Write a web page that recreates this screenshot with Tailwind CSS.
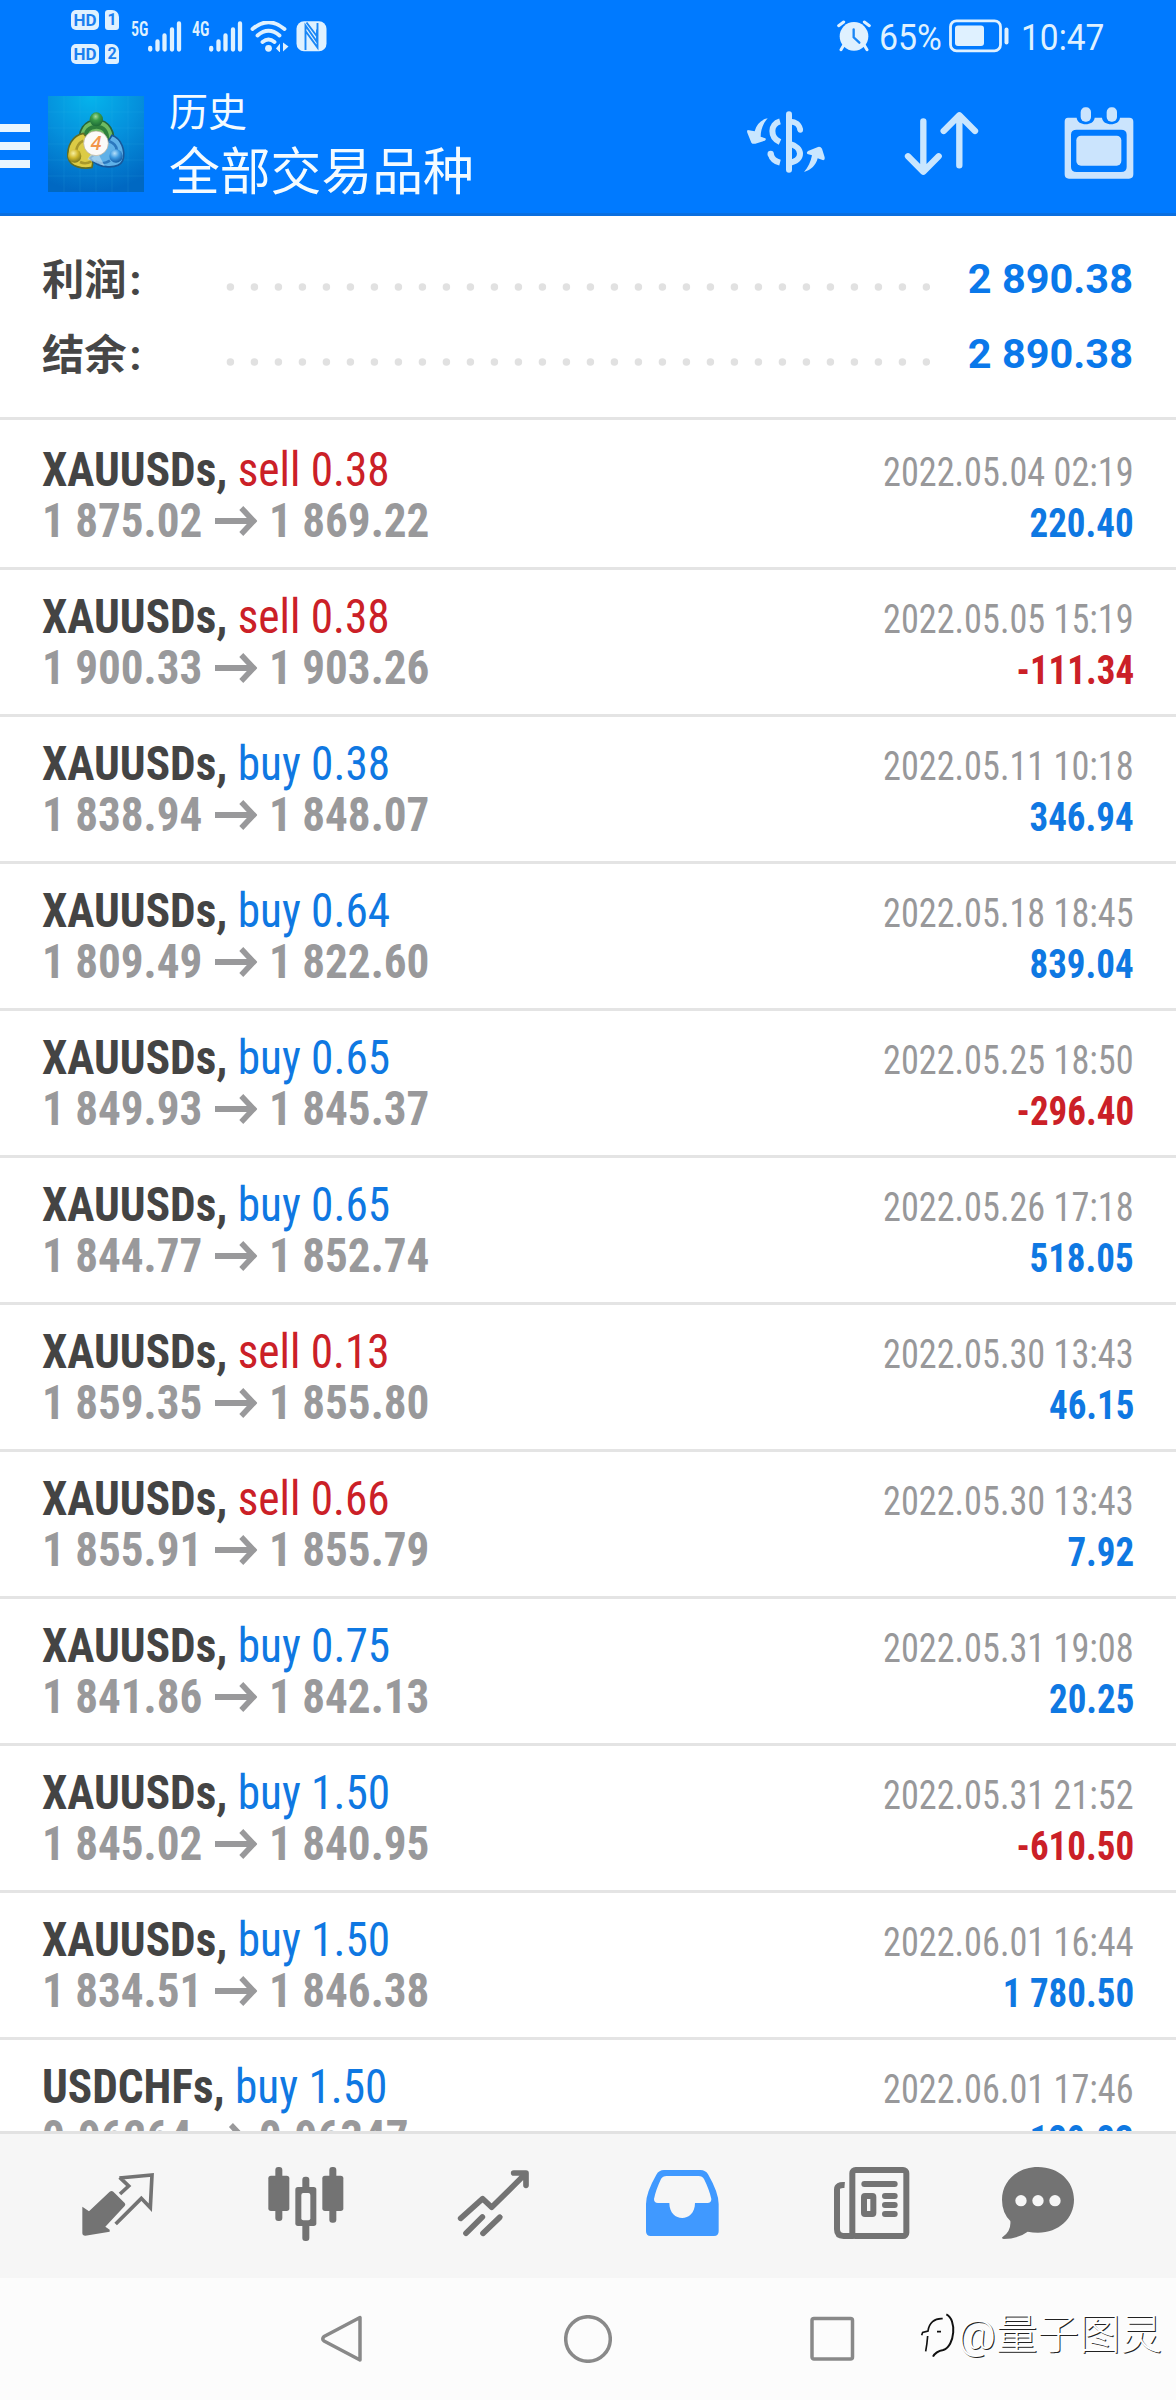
<!DOCTYPE html>
<html lang="zh">
<head>
<meta charset="utf-8">
<title>历史</title>
<script src="https://cdn.jsdelivr.net/npm/@tailwindcss/browser@4"></script>
</head>
<body class="w-[1176px] h-[2400px] overflow-hidden flex flex-col bg-white font-['Roboto','Noto_Sans_CJK_SC',sans-serif] whitespace-nowrap">

<header class="h-[216px] shrink-0 bg-[#007aff] border-b-[3px] border-[#0a6fe0] flex flex-col">
  <!-- status bar -->
  <div class="h-[72px] flex items-center justify-between pl-[71px] pr-[72px] text-[#dff1ff]">
    <div class="flex items-start h-[54px] mt-0.5">
      <div class="flex flex-col gap-[14px]">
        <div class="flex gap-[6px] h-5 text-[#1a7ff0] font-bold leading-5">
          <span class="w-[28px] h-5 rounded-[5px] bg-[#dff1ff] text-[17px] text-center">HD</span>
          <span class="w-[14px] h-5 rounded-[3px] rounded-tr-[7px] bg-[#dff1ff] text-[16px] text-center">1</span>
        </div>
        <div class="flex gap-[6px] h-5 text-[#1a7ff0] font-bold leading-5">
          <span class="w-[28px] h-5 rounded-[5px] bg-[#dff1ff] text-[17px] text-center">HD</span>
          <span class="w-[14px] h-5 rounded-[3px] rounded-tr-[7px] bg-[#dff1ff] text-[16px] text-center">2</span>
        </div>
      </div>
      <span class="w-[17px] ml-[12px] mt-[9px] text-[20px] leading-5 font-semibold [font-stretch:condensed] origin-left scale-x-[.8]">5G</span>
      <svg class="mt-[11px] w-[34px] h-[31px]" viewBox="0 0 34 31" stroke="currentColor" stroke-width="4.3" stroke-linecap="round"><path d="M2.2 27v1.500M9.500 20.500v8M16.500 14.500v14M24 8.500v20M31 2.500v26"/></svg>
      <span class="w-[17px] ml-[10px] mt-[9px] text-[20px] leading-5 font-semibold [font-stretch:condensed] origin-left scale-x-[.8]">4G</span>
      <svg class="mt-[11px] w-[34px] h-[31px]" viewBox="0 0 34 31" stroke="currentColor" stroke-width="4.3" stroke-linecap="round"><path d="M2.200 27v1.500M9.500 20.500v8M16.500 14.500v14M24 8.500v20M31 2.500v26"/></svg>
      <svg class="ml-[7px] mt-[11px] w-[39px] h-[31px]" viewBox="0 0 39 31" fill="none" stroke="currentColor" stroke-width="3.800" stroke-linecap="round"><path d="M2.500 8Q18.500-5.500 34.500 8M7.500 14.500Q18.500 5 29.500 14.500M12.500 21Q18.500 16 24.500 21"/><circle cx="18.500" cy="27.300" r="3.400" fill="currentColor" stroke="none"/><path d="M26 27.500l4-5v9zM38.500 25.500l-5.500-4v9z" fill="currentColor" stroke="none"/></svg>
      <svg class="ml-[7px] mt-[11px] w-[31px] h-[31px]" viewBox="0 0 31 31"><rect x=".5" y=".3" width="30" height="30" rx="7.500" fill="currentColor"/><path d="M9.500 29V4.500L21 21V8.500M10.500 1.500L21.500 16M21.500 2v24.500L9.500 10" fill="none" stroke="#1a86f5" stroke-width="1.900"/></svg>
    </div>
    <div class="flex items-center h-[40px] text-[36px]">
      <svg class="w-[34px] h-[32px]" viewBox="0 0 102 96"><g stroke="currentColor" stroke-width="9" stroke-linecap="round"><path d="M5 17L20 6M97 17L82 6M20 76l-8 13M82 76l8 13"/></g><circle cx="51" cy="49" r="43" fill="currentColor"/><path d="M50 28v24l17 16" fill="none" stroke="#1a86f5" stroke-width="7" stroke-linecap="round"/></svg>
      <span class="w-[64px] ml-[8px] mt-[3px] origin-left scale-x-[.94]">65%</span>
      <svg class="ml-[6px] w-[60px] h-[34px]" viewBox="0 0 60 34"><rect x="1.500" y="1.800" width="50" height="30" rx="6" fill="none" stroke="currentColor" stroke-width="2.800"/><rect x="6" y="6.500" width="29" height="20.500" rx="3" fill="currentColor"/><rect x="55.500" y="8.500" width="4" height="17" rx="2" fill="currentColor"/></svg>
      <span class="ml-[12px] mt-[3px] w-[83px] origin-left scale-x-[.93]">10:47</span>
    </div>
  </div>
  <!-- app bar -->
  <div class="h-[141px] flex items-start text-[#f4fbff]">
    <div class="mt-[52px] w-[30px] flex flex-col gap-[10px]"><i class="h-2 bg-[#e9f6ff]"></i><i class="h-2 bg-[#e9f6ff]"></i><i class="h-2 bg-[#e9f6ff]"></i></div>
    <svg class="ml-[18px] mt-6 w-24 h-24" viewBox="54 48 288 288">
      <defs>
        <radialGradient id="bg" cx=".45" cy="0" r="1"><stop offset="0" stop-color="#05b4ec"/><stop offset=".5" stop-color="#0590dc"/><stop offset="1" stop-color="#0068c2"/></radialGradient>
        <radialGradient id="g" cx=".45" cy=".3" r=".7"><stop offset="0" stop-color="#a5dc98"/><stop offset=".4" stop-color="#3c9d4a"/><stop offset="1" stop-color="#1d6a36"/></radialGradient>
        <radialGradient id="y" cx=".4" cy=".3" r=".7"><stop offset="0" stop-color="#f7f0a0"/><stop offset=".5" stop-color="#d2b92d"/><stop offset="1" stop-color="#7f7a1c"/></radialGradient>
        <radialGradient id="b" cx=".4" cy=".3" r=".7"><stop offset="0" stop-color="#b5e0fa"/><stop offset=".5" stop-color="#3f9be0"/><stop offset="1" stop-color="#135ea8"/></radialGradient>
      </defs>
      <rect x="54" y="48" width="288" height="288" fill="url(#bg)"/>
      <path d="M102 48v288M150 48v288M198 48v288M246 48v288M294 48v288M54 96h288M54 144h288M54 192h288M54 240h288M54 288h288" stroke="#49c2ee" stroke-opacity=".2" stroke-width="2" fill="none"/>
      <path d="M150 200c-10-50 14-80 50-80s60 34 48 84l-22 28-50-8z" fill="#6fbb62" stroke="#27663a" stroke-width="5"/>
      <path d="M168 176c-4-22 10-36 31-36s34 14 32 40" fill="none" stroke="#2f7f3d" stroke-width="12"/>
      <path d="M186 262c-24 6-66 0-72-30-4-34 14-66 46-72l36 44z" fill="#dccb45" stroke="#5f6d25" stroke-width="5"/>
      <path d="M160 182c-12 6-20 18-22 32M150 246c12 6 24 4 34-2" fill="none" stroke="#a8982a" stroke-width="8"/>
      <path d="M246 166c28 10 42 46 32 76-12 26-74 26-98-8l42-30z" fill="#5fb1e8" stroke="#17589b" stroke-width="5"/>
      <path d="M196 244c14 8 32 6 44-2M238 184c14 6 22 14 22 26" fill="none" stroke="#2b78be" stroke-width="8"/>
      <path d="M196 204l28 54-52-20z" fill="#b8daf0" opacity=".7"/>
      <ellipse cx="199" cy="118" rx="20" ry="21" fill="url(#g)"/>
      <circle cx="134" cy="228" r="20" fill="url(#y)"/>
      <circle cx="258" cy="228" r="20" fill="url(#b)"/>
      <circle cx="198" cy="190" r="37" fill="#fbfaf8" stroke="#b8ad97" stroke-width="2"/>
      <text x="198" y="210" text-anchor="middle" font-family="Open Sans" font-weight="600" font-style="italic" font-size="58" fill="#f2954b">4</text>
    </svg>
    <div class="ml-[25px] mt-[14px] flex flex-col">
      <span class="text-[39px] leading-[54px]">历史</span>
      <span class="text-[50.800px] leading-[66px]">全部交易品种</span>
    </div>
    <svg class="ml-auto mt-[36px] w-[82px] h-[68px] text-[#c9e6ff]" viewBox="48 36 246 204" fill="none" stroke="currentColor">
      <path d="M177 55v166" stroke-width="18" stroke-linecap="round"/>
      <path d="M150 76c-30 8-31 48 0 62" stroke-width="18"/>
      <path d="M177 77c20-2 32 10 34 26" stroke-width="17"/><circle cx="211" cy="102" r="8" fill="currentColor" stroke="none"/>
      <path d="M177 143c44 10 44 52 0 57" stroke-width="18"/>
      <path d="M150 200c-16-4-25-14-28-26" stroke-width="18"/><circle cx="122" cy="174" r="9.500" fill="currentColor" stroke="none"/>
      <path d="M113 67C93 71 80 84 74 106L53 102Q50 106 52 110L64 140Q68 145 76 143L104 134Q110 130 106 127L92 122C92 100 100 82 113 67Z" fill="currentColor" stroke="none"/>
      <path d="M222 228C243 222 258 208 263 187L280 193Q286 191 284 184L276 158Q272 151 264 153L234 165Q228 169 232 174L246 178C242 198 235 213 222 228Z" fill="currentColor" stroke="none"/>
    </svg>
    <svg class="ml-[76px] mt-[39px] w-[76px] h-[66px] text-[#c9e6ff]" viewBox="524 45 228 198" fill="none" stroke="currentColor" stroke-width="19" stroke-linecap="round" stroke-linejoin="round"><path d="M582 76v150M536 181l46 46 46-46M690 208V60M643 105l47-47 47 47"/></svg>
    <svg class="ml-[84px] mr-[42px] mt-[34px] w-[70px] h-[74px] text-[#cbe4fd]" viewBox="1090 318 210 222">
      <path d="M1102 353h26c2 26 52 26 54 0h22c2 26 52 26 54 0h28q12 0 12 12v158q0 13-13 13h-180q-13 0-13-13v-158q0-12 10-12zM1128 389q-17 0-17 15v97q0 15 17 15h133q17 0 17-15v-97q0-15-17-15z" fill="currentColor" fill-rule="evenodd"/>
      <rect x="1140" y="322" width="31" height="43" rx="14" fill="currentColor"/><rect x="1218" y="322" width="31" height="43" rx="14" fill="currentColor"/>
      <rect x="1127" y="407" width="135" height="90" rx="14" fill="currentColor"/>
    </svg>
  </div>
</header>

<section class="h-[204px] shrink-0 border-b-[3px] border-[#e4e4e4] pl-[42px] pr-[43px] pt-[26px] flex flex-col text-[41.500px] font-bold">
  <div class="h-[75px] flex items-center">
    <span class="w-[184px] mt-[2px] text-[42.300px] text-[#464646]">利润<span class="ml-[3px]">:</span></span>
    <svg class="w-[704px] h-2 mt-[14px]" viewBox="0 0 704 8"><path d="M4.400 4H702" stroke="#e1e1e1" stroke-width="7.500" stroke-linecap="round" stroke-dasharray="0 24"/></svg>
    <span class="ml-auto text-[#0a78ea]">2 890.38</span>
  </div>
  <div class="h-[75px] flex items-center">
    <span class="w-[184px] mt-[2px] text-[42.300px] text-[#464646]">结余<span class="ml-[3px]">:</span></span>
    <svg class="w-[704px] h-2 mt-[14px]" viewBox="0 0 704 8"><path d="M4.400 4H702" stroke="#e1e1e1" stroke-width="7.500" stroke-linecap="round" stroke-dasharray="0 24"/></svg>
    <span class="ml-auto text-[#0a78ea]">2 890.38</span>
  </div>
</section>

<main id="deals" class="h-[1711px] pt-[3px] shrink-0 overflow-hidden flex flex-col [font-stretch:condensed]"></main>

<nav class="h-[147px] shrink-0 bg-[#f6f6f6] border-t-[3px] border-[#e2e2e2] flex items-start pt-[30px] pl-[80px] text-[#737373]">
  <svg class="w-[76px] h-[78px]" viewBox="240 432 228 234"><path d="M247 560l20 14 62-59q6-4 11 0l34 34q4 5 0 9l-58 62 13 9v6l-73 12q-9 0-9-8z" fill="currentColor"/><path d="M358 474l98-9-5 98-27-28-77 77M359 472l27 26-26 24" fill="none" stroke="currentColor" stroke-width="11"/></svg>
  <svg class="ml-[111px] w-[78px] h-[78px]" viewBox="800 432 234 234" fill="currentColor"><rect x="825" y="441" width="21" height="162" rx="9"/><rect x="804" y="467" width="63" height="106" rx="8"/><rect x="987" y="441" width="21" height="167" rx="9"/><rect x="966" y="467" width="63" height="106" rx="8"/><rect x="906" y="470" width="21" height="193" rx="9"/><rect x="885" y="501" width="63" height="117" rx="8"/><rect x="903" y="519" width="27" height="82" rx="6" fill="#f6f6f6"/></svg>
  <svg class="ml-[111px] w-[76px] h-[78px]" viewBox="168 432 228 234" fill="none" stroke="currentColor" stroke-width="17" stroke-linecap="round" stroke-linejoin="round"><path d="M182 595l66-59 27 26 100-99M341 459h37v37"/><path d="M198 640l49-49M249 640l50-48"/><path d="M244 588l6 7M296 589l7 6" stroke-width="14" stroke-linecap="butt"/></svg>
  <svg class="ml-[112px] w-[76px] h-[78px] text-[#4099ff]" viewBox="732 432 228 234"><path d="M792 450h109q16 0 24 14 31 54 31 88v82q0 14-14 14H752q-14 0-14-14v-82q0-34 31-88 8-14 23-14zM800 468q-12 0-17 9-16 34-21 60 0 12 12 12h34c0 60 77 60 77 0h37q12 0 12-12-6-28-22-60-5-9-16-9z" fill="currentColor" fill-rule="evenodd"/></svg>
  <svg class="ml-[113px] w-[78px] h-[78px]" viewBox="160 432 234 234" fill="none" stroke="currentColor" stroke-width="18"><rect x="218" y="450" width="162" height="198" rx="10"/><path d="M195 495q-23-2-23 14v119q0 20 20 20h30"/><path d="M254 492h91M316 528h29M316 555h29M316 582h29" stroke-linecap="round"/><rect x="253" y="528" width="28" height="54" rx="3"/></svg>
  <svg class="ml-[89px] w-[76px] h-[78px]" viewBox="660 432 228 234"><path d="M774 441c62 0 108 42 108 98s-46 99-108 99q-16 0-31-3-30 22-72 22-7-2-4-5 27-18 24-49-25-25-25-64c0-56 46-98 108-98z" fill="currentColor"/><g fill="#f6f6f6"><circle cx="723" cy="542" r="17"/><circle cx="774" cy="542" r="17"/><circle cx="825" cy="542" r="17"/></g></svg>
</nav>

<footer class="grow bg-[#fcfcfc] flex items-start pl-[318px] pt-[33px] text-[#898989]">
  <svg class="mt-1 w-[46px] h-[48px]" viewBox="0 0 46 48" fill="none" stroke="currentColor" stroke-width="3.500" stroke-linejoin="round"><path d="M42 2.500V45L6 26Q3.500 24 6 21.500Z"/></svg>
  <svg class="ml-[200px] mt-1 w-[48px] h-[48px]" viewBox="0 0 48 48" fill="none" stroke="currentColor" stroke-width="3.500"><circle cx="24" cy="24" r="22.300"/></svg>
  <svg class="ml-[198px] mt-1 w-[46px] h-[48px]" viewBox="0 0 46 48" fill="none" stroke="currentColor" stroke-width="3.500"><rect x="2" y="3.500" width="40.500" height="40.500" rx="2"/></svg>
  <div class="ml-[62px] flex items-center h-[48px]">
    <svg class="w-[40px] h-[48px] mt-[2px]" viewBox="55 80 120 144" fill="none" stroke="#111" stroke-width="5"><path d="M66 150l3-9 16-4C88 114 104 98 129 100M84 152q-2 26-6 46M112 139h12"/><path d="M140 87C172 102 166 182 131 194Q108 198 100 214" stroke-width="6"/></svg>
    <span class="text-[41.500px] leading-[48px] font-light text-white [text-shadow:1px_1px_0_#222]">@量子图灵</span>
  </div>
</footer>

<script>
const deals = [
  ['XAUUSDs','sell','0.38','1 875.02','1 869.22','2022.05.04 02:19','220.40'],
  ['XAUUSDs','sell','0.38','1 900.33','1 903.26','2022.05.05 15:19','-111.34'],
  ['XAUUSDs','buy','0.38','1 838.94','1 848.07','2022.05.11 10:18','346.94'],
  ['XAUUSDs','buy','0.64','1 809.49','1 822.60','2022.05.18 18:45','839.04'],
  ['XAUUSDs','buy','0.65','1 849.93','1 845.37','2022.05.25 18:50','-296.40'],
  ['XAUUSDs','buy','0.65','1 844.77','1 852.74','2022.05.26 17:18','518.05'],
  ['XAUUSDs','sell','0.13','1 859.35','1 855.80','2022.05.30 13:43','46.15'],
  ['XAUUSDs','sell','0.66','1 855.91','1 855.79','2022.05.30 13:43','7.92'],
  ['XAUUSDs','buy','0.75','1 841.86','1 842.13','2022.05.31 19:08','20.25'],
  ['XAUUSDs','buy','1.50','1 845.02','1 840.95','2022.05.31 21:52','-610.50'],
  ['XAUUSDs','buy','1.50','1 834.51','1 846.38','2022.06.01 16:44','1 780.50'],
  ['USDCHFs','buy','1.50','0.96264','0.96347','2022.06.01 17:46','129.83'],
];
document.getElementById('deals').innerHTML = deals.map(([sym, side, vol, from, to, time, profit]) => `
  <div class="h-[147px] shrink-0 border-b-[3px] border-[#e4e4e4] flex justify-between px-[42px]">
    <div class="pt-[21px] flex flex-col items-start text-[48px] leading-[51px]">
      <div class="origin-left scale-x-[.943]"><b class="font-bold text-[#444]">${sym},</b> <span class="${side === 'sell' ? 'text-[#cb2027]' : 'text-[#0f78e2]'}">${side} ${vol}</span></div>
      <div class="flex items-center font-bold text-[#99999b] origin-left scale-x-[.94]">${from}<svg class="ml-[13px] mr-[13px] w-[45px] h-[32px]" viewBox="0 0 45 32" fill="none" stroke="currentColor" stroke-width="6"><path d="M0 16h42M28 3l13 13L28 29"/></svg>${to}</div>
    </div>
    <div class="pt-[24px] flex flex-col items-end text-[40px] leading-[51px]">
      <span class="text-[#98989a] origin-right scale-x-[.906]">${time}</span>
      <b class="font-bold origin-right scale-x-[.925] ${profit[0] === '-' ? 'text-[#cb2027]' : 'text-[#0f78e2]'}">${profit}</b>
    </div>
  </div>`).join('');
</script>
</body>
</html>
